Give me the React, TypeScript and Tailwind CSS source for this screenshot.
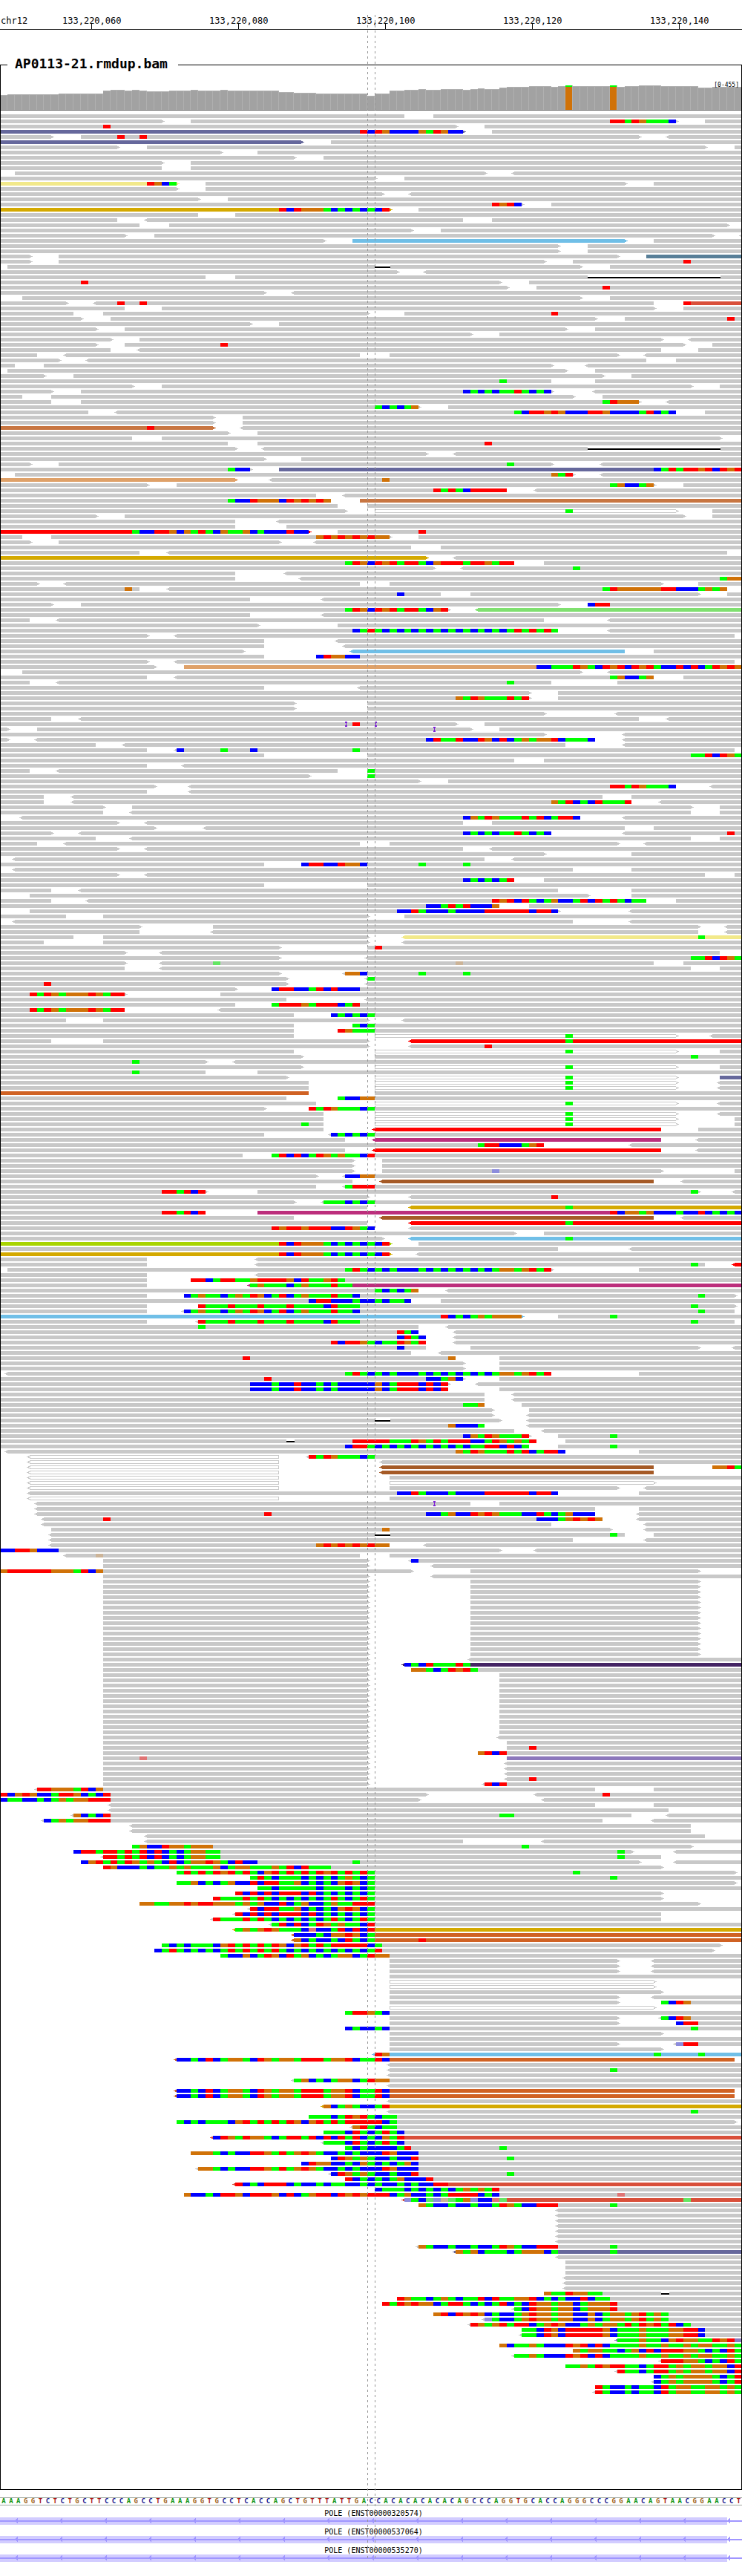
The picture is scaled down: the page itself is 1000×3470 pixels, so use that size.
import React from "react";

const BASES = 101;
const WIDTH = 1000;
const PITCH = 7;

const edge = (i: number) => Math.round((i * WIDTH) / BASES);

/*
 * One line per pileup row. Tokens:
 *   [o][colour][<]start-end[>]  a read (o = outlined, < and > = strand arrow)
 *   start:LETTERS               mismatched bases (lower case = low quality)
 *   dstart-end                  deletion
 *   ipos                        insertion
 * A leading "*n" repeats the row n times.
 */
const PILEUP = `
0-55 59-101
0-22> 26-92> 96-101 83:TTATGAAAC
0-62> 66-101 14:T
P0-63> 67-101 49:TCTGCCCCGATGCC
0-7> 11-87> <91-101 16:T 19:T
P0-41> 45-101
0-16> 20-96> 100-101
0-30> 35-101
0-40> 44-101
0-22> 26-101
0-22 26-101
2-66> <70-101
0-51> 55-101
Y0-24> 28-85> 89-101 20:TGCA
0-24> 28-101
0-52> <56-101
0-27> 31-101
0-71> 75-101 67:TGTC
D0-53> 57-101 38:TCTGGGACACACACT
0-27 32-101
0-16 <20-63 67-101
0-19 23-99>
0-56> 60-101
0-17> 21-97> <101-101
0-44> B48-85> 89-101
*2 0-76> 80-101
0-4> 8-84> S88-101
0-4> 8-74> 78-101 93:T
1-79> 83-101 d51-53
0-54> <58-101
0-28 32-101 d80-98
0-68> 72-101 11:T
0-69> 73-101 82:T
0-36> <40-101
3-79> 83-101
0-9> <13-89 R93-101 16:T 19:T 93:T
0-17 22-89> 93-101
0-10 14-50> 55-101 75:T
0-11> 15-81> 85-101 99:T
0-34> 38-101
0-13> 17-77> 81-101
0-64> 68-101
0-15> 19-90> <94-101
0-13> 17-93> 97-101 30:T
0-15 <19-90 95-101
0-5 <9-49 53-84> <88-101
0-8> <12-88 92-101
0-2 6-75> <80-101
1-77> 81-101
0-6> 10-82> 86-101
0-75 81-101 68:A
0-18> 22-94> 98-101
0-7> 11-75> <81-101 63:CACACAATACAC
0-3 7-78> 82-101
0-7 11-87> <91-101 82:ATGGG
0-57> 61-101 51:ACACAG
0-12 <16-92 96-101 70:ACTTGTGCCCTTGCCCCATCAC
*2 0-29> 33-101
O0-29> <33-101 20:T
0-31> 35-101
0-18 22-98>
0-31 35-101 66:T
0-32> <36-101 d80-98
0-58> <62-101
0-36> 41-101
0-4> 8-75> <82-101 69:A
0-34> P38-101 31:ACC 89:CATATTGTCTGT
2-78> <82-101 75:GAT
E0-32> <37-101 52:G
0-20> 24-89> 93-101 83:AGCCAG
0-69 <73-101 59:TATACTTTTT
0-43 <47-101
0-45 O49-101 31:ACCTGGGCTGTGTG
0-46 50-101
0-47> o51-92> 97-101 77:A
0-13> 17-93> 97-101
0-32 <38-101
0-32 39-101
F0-42> 46-101 57:T 18:ACCTTGCGATACGAAGCACCCTCC
0-3 7-53> 57-101 43:GTGTGTGTGG
0-4> 8-38> <43-101
0-56 60-101
0-19 <23-99
D0-58> <62-101
0-70 74-101 47:ATGCTGTATTACGTTTATTGATT
0-59> <63-101 78:A
0-32 <39-101
0-32 <41-101 98:AGG
0-5> <9-49 53-90> 95-101
0-19 <23-99 17:G 82:ATGGGGGGTTCCCAGAG
0-60 64-95> 99-101 54:C
0-34 <44-101
0-7> 11-76> 80-101 80:CTT
0-61> L<65-101 47:ATGCTGTATTACGT
0-34 <44-101
0-4 <8-74 <83-101
0-35> 46-101
0-76 <83-101 48:CATACACACACACACACACACATATATA
0-20> <24-100
0-36 <46-101
0-36 <47-101
0-33> B<48-85 89-101
0-36 43-101 43:CTGGCC
0-20> <24-100
0-21> E25-101 73:CCAAATGACTGTCTGTACCTCTCATGTG
3-79> <83-101
0-20 <24-89 93-101 83:AGCCAG
0-4 <8-75 84-101 69:A
0-36 <49-101
0-72> 76-101
0-72> 76-101 62:GATGAAATAT
*2 0-40> 50-101
0-74> <84-101
0-7 <11-87 <91-101
0-62> 66-101 48:T i47 i51
0-1> 5-64> 68-101 i59
0-74> <85-101
0-1> <5-81 <85-101 58:CTAATCCTGCTCAGAGGTCAAAC
0-13 <17-77 <85-101
0-20 <24-100 24:C 30:A 34:C 48:A
0-36 50-101 94:AATCTGA
0-70 74-101
0-20 <25-101
0-4 <8-46 50-101 50:A
0-42> 50-101 50:A
0-57> 61-101
0-21> <26-92 <97-101 83:TTATGAAAC
0-20 <26-101
0-6 <10-82 86-101
0-6 <10-86 <90-101 75:GATCACTAAAT
0-14> 18-94> 98-101
0-14 <18-94 98-101
<3-79 <85-101 63:CGATGAAATATCATTC
0-16> <20-63 67-101
0-21> <28-85 89-101
0-7> <11-75 <85-101 99:T 63:CACACAATACAC
0-13 <18-94 98-101
0-5 <9-49 53-84> <88-101
0-16> <20-63 <67-101
0-74> 86-101
<2-66 <70-101
0-36 41-101 57:A 63:A 41:CTTCCTGGC
<2-78 86-101
0-16> <20-96 100-101
0-70 74-101 63:CACACAT
0-36 50-101
0-7 <11-76 86-101
4-80> 86-101
0-7 <12-88 92-101 67:TGTCTACAGCCATCTATACAA
0-68 72-101 58:CCATATCCCG
4-76> <86-101 54:CCTACCCACCCCTTTTTTCTTC
0-9 14-50> 55-101
<2-78 <86-101
0-19> 29-95> <99-101
0-19 <29-95 <99-101
0-10 14-50> Y<55-101 95:A
0-6 14-50> <55-101
0-38> 50-101 51:T
0-17> <22-98
0-38> <50-101 94:AATCTGA
0-17> <22-89 93-101 29:a 62:g
0-17 <22-94 98-101
0-38> <47-101 47:GGC 57:A 63:A
0-39> <50-101 50:A
0-39> <50-101 6:T
0-32> 37-101 37:CTTCCATCTCCC
0-17> 30-101 4:TATGAGGGTGATT
0-39 <50-101
0-32 37-101 37:ATTTGATTTCAT
0-17 <30-101 4:TATGAGGGTGATT
0-40 45-101 45:CACACA
0-9 14-50> <55-101
0-40 48-101 48:ACA
0-40 46-101 46:TGAAA
0-40 o51-92> <97-101 77:A
0-7 14-50> F<56-101 77:A
0-50> <56-101 66:T
0-40 o51-92> 98-101 77:A
0-41> 51-101 94:A
0-28> <32-101 18:A
0-41> o51-92> 98-101 77:A
0-28 35-101 18:A
0-39> o51-92> P98-101 77:A
*2 0-42 o51-92> <98-101 77:A
C0-42 51-101
0-39 46-101 46:ACCGG
0-43 o51-92> <98-101 77:A
0-36> 42-101 42:TATGAAACA
0-44 o51-92> <98-101 77:A
0-44 o51-92> 100-101 77:A
0-44 o51-92> 100-101 41:A 77:A
0-44 F<51-90 95-101
0-36 <45-101 45:CACACA
0-47 M<51-90 <95-101
0-74 <86-101 65:ATTCCCAGT
0-47 F<51-90 <95-101
0-33 37-101 37:ATCTCATGAGAACT
*2 0-48> 52-101
0-48> 52-90> 100-101 67:c
0-43> <47-101 47:CCGG
0-48 N<52-89 <93-101
0-43 <47-101 47:ATTT
0-28> 35-95> <100-101 22:TTATCT 94:A
0-50> <56-101 75:T
0-40> <44-101 44:AAACACA
0-50 D<56-101 77:A
0-28 M35-101 22:TTATCT 83:TCGGAGCCCACCTCACAC
0-40 N<52-89 <93-101
0-50 F<56-101 77:A
0-51 <56-101 37:TGTTGTTTCCTGAC
0-70> 74-101
0-52> B<56-101 77:A
K0-53> 57-101 38:TCTGGGACACACACT
0-76 <86-101
D0-53> <57-101 38:TCTGGGACACACACT
0-20 <35-101
0-20 <35-96 F<100-101 94:A
1-75> 87-101 47:ATACACACCCACACACACACAGGAGTAT
0-20 <35-101
0-20 26-101 26:TTCATTAAGTTTTGCTAAGTA
0-20 M<34-101 34:AGAAACAGAAATAA
0-57 <61-101 51:ACACAG
0-20 25-100> 25:CAGAACAGATGCATCAGAAATAAC 95:A
0-56 60-101 42:CTTCCCACCACAAC
0-20 27-100> 27:TAAATAAATAAATAAAACTAAA 94:A
0-20 <25-100 25:CAGAACAGATGCATCAGAAATAAC 95:A
B0-71> 76-101 60:TCACAGAGGGG 83:A
0-20 <27-100 27:TAAATAAATAAATAAAACTAAA 94:A
0-57 <61-101 27:A
0-57 <62-101 54:TAC
0-58 <62-101 54:CTAC
0-58 <62-101 45:TCTTGACAATGAT
0-58 64-95> <100-101 54:C
0-56 <60-101
0-62 68-101 33:T 61:G
*2 0-63> 68-101
<1-75 87-101 47:ATACACACCCACACACACACAGGAGTAT
0-63> 68-101 36:T 58:CCAGC
0-61> <65-101 34:CCCACCTCCACACCCCCGCATTTCTCT
0-61 68-101 34:CCCACCTCCACACCCCCGCATTTCTCT
*2 0-66 <70-101
0-66 71-101 63:AAG
0-67> 72-101
0-67> <72-101
0-68> <72-101 d51-53
0-66 <72-101 61:GCCCA
0-70 <74-101
0-72> 76-101 63:CGATGAAAT 83:A
0-73 77-101 d39-40 48:TTTTTAAATGATATTTCCATGAGAT
0-72 76-101 47:CTTACACACACACACACAATTCTCA 83:A
<1-77 87-101 62:GATGAAATATCATTC
o<4-38 <42-101 42:TATGAAACA
o<4-38 <52-101
o<4-38 N<52-89 97-101 97:GGTA
o<4-38 N<52-89
o<4-38 53-101
o<4-38 o53-89>
o<4-38 53-84> <88-101
<4-76 87-101 54:CCTACCCACCCCTTTTTTCTTC
o<4-38 53-101
<5-64 68-101 i59
<5-81 87-101
<5-81 <87-101 36:T 58:CCAGCCTGTGAAACCTACAGCCC
<6-82 <87-101 14:T 73:CCCAGTGTG
<6-75 <88-101
7-83> <88-101 52:G
<7-85 89-101 d51-53 83:A
<7-78 <88-101
<7-53 <58-101 43:GTGTGTGTGG
0-68> <73-101 0:CCTTGCCC
<9-49 53-101 13:g
14-50> <56-101 56:C
14-50> <59-101
0-56> 64-95> 0:GTTTTTTGGGATCG
14-50> <59-101
*15 14-50> 64-95>
14-50> <64-101
14-50> V<55-101 55:CACTAAATA
14-50> 56-101 56:GGACATGTA
*12 14-50> 68-101
14-50> <68-101
14-50> 69-101
14-50> 69-101 72:T
14-50> 65-101 65:GTCT
14-50> U69-101 19:t
*3 14-50> <69-101
14-50> <69-101 72:T
14-50> <66-101 66:TCT
<5-81 89-101 5:TTGGGATCG
0-58> <73-101 82:T 0:TCGTGCCATTGCACT
0-57> <74-101 0:CAACCACAGAGGTTT
<15-81 89-101
<15-91
<10-86 <91-101 10:GCACT 68:AA
<6-82 <89-101 6:CAGAGGTTT
*2 <18-94
<20-96
<20-63 <74-101
18-94> 18:AGCCTGGAGGG 71:A
10-86> <92-101 84:A 10:CTTATTATATCTCACAGGAA
<14-90 84:A 14:TTATATCTCACAGGAA
11-87> <92-101 48:A 11:CGTATATGAGACTCAGGTGACTCC
14-90> 14:TGCCCACAAGAGAAAGCAGGAAAGATCTAAA
24-100> 78:A 24:ATATATGTATACGTATATATGTATATA
34-101 83:A 34:ATACAAACACACAGACA
24-100> 24:AAGCACAGCCTCTTAAGCACACGTGCA
35-101 35:AACAAAAACAAACACA
32-90> 32:TCTCTCTTTCTCACACACA
29-90> 29:TAAATATACACACACATACATA
19-95> 19:GGAAGGTGTTGGGAGAGCCTCAGCCAGAATTT
<34-101 34:TCTTAAGCACACGTGCA
<32-90 32:TCTCTCTTTCTCACACACA
<29-90 29:TAAATATACACACACATACATA
<37-101 37:ATCTCATGAGAACT
D<32-101 32:AGAGTGAAACtCCATCTCT
C<40-101 40:CCCACGGTGCA
C<40-101 57:T 40:GCACCACTACA
22-98> 22:ACACAAACGTATATATGCGTATATTTTTCA
21-97> 21:CATACACACATATATATACACACACACACAT
30-101 30:ACCGCATGCTAGCACAGGCATGG
*3 53-84> <89-101
53-101
*2 o53-89>
53-90>
53-84> <89-101
53-84> 90-101 90:ACTG
o53-89>
47-101 47:ATTGAC
53-84> <90-101 90:ACTG
53-84> 92-101 92:CTT
47-101 47:CACCAC 94:A
53-90>
53-101
53-84> <92-101 92:cTT
53-90>
B<51-101 51:TG 89:A 95:A
C<24-100 24:CCACTCAGGACTGAGGATTTAGGTCAATC
<53-101
<53-101 83:A
<53-101
<40-101 40:AGCACAGGCATGG
<53-101
*2 C<24-100 24:CCACTCAGGACTGAGGATTTAGGTCAATC
<53-101
D<44-101 44:GCAGACCAT
<53-101 94:A
42-101 42:AAACATGTACAA
24-100> 24:ACACAAACGTATATATGCGTATATTTTTCA
<48-101 48:GTACAA
44-101 44:AAACTACATAC
R<29-101 29:CTGATGGACATTATCTCTATCACGAT
<44-101 44:AAACTACATAC
47-101 68:A 47:ACACCCCAT
26-101 26:GGGACACCTTGATAGTGACCACACCCTGCCC
45-101 69:A 45:CTGAGACCACCT
41-101 41:CTGGCCACGACACAGC
<27-101 27:GGACACCTTGATAGTGACCACACCCTGCCC
<45-101 69:A 45:CTGAGACCACCT
47-101 47:TCACACAGCCCT
R<32-101 32:TCACTTTCACCACAACCACACCACACCTT
51-101 51:CAAACACACACAGAGAT
25-101 84:t 25:GCCACTTGCTTTGCTCAGTTCTGTGTTTCAGCCACATTTTCAC
R<55-101 55:cACacgaAGcCCta 93:a
57-101 83:A 57:GACCACCACCATGACCTTT
*7 <76-101
<57-101 83:A 57:GACCACCACCATGACCTTT
P<62-101 83:A 62:GAGCAAACAGGGCA
<76-101
*3 77-101
*3 <77-101
74-101 d90-91 74:GAATGGAA
54-101 54:TGAACAGACAATCTAAGGTCACACCTCAA
52-101 52:TATGTGGCATTACACATCACTGGAGGCAGGGT
<70-101 70:ACTGGAGGCAGGGT
59-101 59:GTCTGTGCACCAGTGGAGGCCGCAGGAGTAGA
<66-101 66:cACCAGTGGAGGCCGCAGGAGTAGA
<64-101 64:TGAGTATTCAGTGCCAGAGGATATGTATCA
71-101 71:AACTGCTTTTTGCAAAGAAAGGTTC
<71-101 71:AACTGCTTTTTGCAAAGAAAGGTTC
U<84-101 84:AAAGAACGTGGAATGT
68-101 68:GCAAGACCCTGTCTCAAAAGAAGAAGAGGAAGA
78-101 78:GAGGAACAGCTCTTTGGACACTA
<70-101 70:AAGACCCTGTCTCAAAAGAAGAAGAGGAAGA
<90-101 90:TTTGGACACTA
77-101 77:AAGATGTTAACATTAGAGGAGGCT
<84-101 84:TAACATTAGAGGAGGCT
89-101 89:CAGAGGGGACAT
<89-101 89:CAGAGGGGACAT
81-101 81:TACCACAACTAGGAAGGAGA
<81-101 81:TACCACAACTAGGAAGGAGA
`;

const ROWS: string[] = PILEUP.trim()
  .split("\n")
  .flatMap((line) => {
    const m = /^\*(\d+) (.*)$/.exec(line);
    return m ? Array<string>(Number(m[1])).fill(m[2]) : [line];
  });

const READ_COLOURS: Record<string, string> = {
  P: "#66689c",
  Y: "#f2e98a",
  D: "#d4a900",
  B: "#70bfe7",
  S: "#587f98",
  R: "#d94f3a",
  O: "#c87642",
  E: "#dfa169",
  L: "#80e070",
  F: "#ff0000",
  C: "#d06224",
  M: "#bc2e7c",
  N: "#a55a26",
  K: "#a8d400",
  V: "#442464",
  U: "#8c78bc",
};

const BASE_COLOURS: Record<string, string> = {
  A: "#00ff00",
  C: "#0000ff",
  G: "#d07208",
  T: "#ff0000",
  a: "#64e664",
  c: "#8c8cdc",
  g: "#ccb498",
  t: "#e07474",
};

const box = (x: number, y: number, w: number, h: number) => `M${x} ${y}h${w}v${h}h${-w}z`;

function buildLayers() {
  const reads: Record<string, string> = {};
  const bases: Record<string, string> = {};
  let hollow = "";
  let gaps = "";
  let deletions = "";
  let insertions = "";
  ROWS.forEach((row, r) => {
    const y = r * PITCH;
    for (const token of row.split(" ")) {
      const read = /^(o?)([A-Z]?)(<?)(\d+)-(\d+)(>?)$/.exec(token);
      if (read) {
        const s = edge(Number(read[4]));
        const e = edge(Number(read[5]));
        const colour = READ_COLOURS[read[2]] ?? "#c8c8c8";
        let d = box(s, y, e - s, 5);
        if (read[3]) d += box(s - 2, y + 1, 2, 3) + box(s - 4, y + 2, 2, 1);
        if (read[6]) d += box(e, y + 1, 2, 3) + box(e + 2, y + 2, 2, 1);
        reads[colour] = (reads[colour] ?? "") + d;
        if (read[1]) {
          hollow += box(s + 1, y + 1, e - s - 2, 3);
          if (read[3]) hollow += box(s - 1, y + 2, 2, 1);
          if (read[6]) hollow += box(e - 1, y + 1, 1, 3) + box(e, y + 2, 1, 1);
        }
        continue;
      }
      const del = /^d(\d+)-(\d+)$/.exec(token);
      if (del) {
        const s = edge(Number(del[1]));
        const w = edge(Number(del[2])) - s + 1;
        gaps += box(s, y, w, 5);
        deletions += box(s, y + 2, w, 2);
        continue;
      }
      const ins = /^i(\d+)$/.exec(token);
      if (ins) {
        const x = edge(Number(ins[1]));
        insertions += box(x, y - 1, 3, 2) + box(x + 1, y, 1, 5) + box(x, y + 4, 3, 2);
        continue;
      }
      const [start, letters] = token.split(":");
      [...letters].forEach((letter, k) => {
        const s = edge(Number(start) + k);
        const colour = BASE_COLOURS[letter];
        bases[colour] = (bases[colour] ?? "") + box(s, y, edge(Number(start) + k + 1) - s, 5);
      });
    }
  });
  return { reads, bases, hollow, gaps, deletions, insertions };
}

const LAYERS = buildLayers();

/* Coverage bar heights in pixels as [height, number of bases]. */
const COVERAGE: number[] = (
  [
    [20, 1], [21, 7], [22, 6], [26, 1], [27, 2], [26, 1], [27, 1], [26, 1], [25, 3], [26, 3],
    [27, 1], [26, 3], [27, 1], [26, 7], [24, 2], [23, 3], [22, 7], [19, 1], [22, 2], [26, 2],
    [27, 2], [28, 1], [27, 2], [28, 3], [27, 1], [28, 1], [29, 1], [28, 2], [30, 1], [31, 3],
    [32, 3], [31, 1], [32, 1], [33, 1], [32, 5], [33, 1], [31, 1], [32, 2], [33, 3], [32, 5],
    [30, 2], [31, 4],
  ] as [number, number][]
).flatMap(([h, n]) => Array<number>(n).fill(h));

const VARIANT_SITES = [77, 83];

const SEQUENCE =
  "AAAGGTCTCTGCTTCCCAGCCTGAAAGGTGCCTCACCAGCTGTTTATTGAC" +
  "CACACACACACAGCCCAGGTGCACCAGGGCCCGGAACAGTAACGGAACCT";

const LETTER_CLASSES: Record<string, string> = {
  A: "text-[#109410]",
  C: "text-[#14148c]",
  G: "text-[#a0641a]",
  T: "text-[#a81010]",
};

const TICKS = ["133,220,060", "133,220,080", "133,220,100", "133,220,120", "133,220,140"];
const GENES = ["POLE (ENST00000320574)", "POLE (ENST00000537064)", "POLE (ENST00000535270)"];

function Ruler() {
  return (
    <header className="flex h-10 overflow-hidden border-b border-black pt-5 text-[12px] leading-4">
      <span className="w-[2.475%] shrink-0 pl-px whitespace-nowrap">chr12</span>
      {TICKS.map((label) => (
        <div key={label} className="flex w-[19.802%] shrink-0 flex-col items-center">
          <span>{label}</span>
          <span className="-mt-1 h-[7px] w-px shrink-0 bg-black" />
        </div>
      ))}
    </header>
  );
}

function Coverage() {
  return (
    <div className="relative">
      <svg
        className="block h-[51px] w-full"
        viewBox="1 0 998 51"
        preserveAspectRatio="none"
        shapeRendering="crispEdges"
        role="img"
        aria-label="Coverage"
      >
        {COVERAGE.map((h, i) => {
          const x = edge(i);
          const w = edge(i + 1) - x;
          const y = 50 - h;
          return (
            <g key={i}>
              <rect x={x} y={y} width={w} height={h} fill="#b0b0b0" />
              {VARIANT_SITES.includes(i) ? (
                <>
                  <rect x={x} y={y} width={w - 1} height={2} fill="#00ff00" />
                  <rect x={x} y={y + 2} width={w - 1} height={h - 2} fill="#d07208" />
                </>
              ) : (
                <rect x={x} y={y + 1} width={w - 1} height={h - 1} fill="#a2a2a2" />
              )}
            </g>
          );
        })}
        <rect x={0} y={50} width={1000} height={1} fill="#707070" />
      </svg>
      <span className="absolute top-3 right-[3px] text-[8px] leading-[10px]">[0-455]</span>
    </div>
  );
}

function Reads() {
  const height = ROWS.length * PITCH;
  return (
    <svg
      className="mt-[5px] block w-full"
      height={height}
      viewBox={`1 0 998 ${height}`}
      preserveAspectRatio="none"
      shapeRendering="crispEdges"
      role="img"
      aria-label="Aligned reads"
    >
      {Object.entries(LAYERS.reads).map(([colour, d]) => (
        <path key={colour} d={d} fill={colour} />
      ))}
      <path d={LAYERS.hollow} fill="#ffffff" />
      <path d={LAYERS.gaps} fill="#ffffff" />
      <path d={LAYERS.deletions} fill="#000000" />
      {Object.entries(LAYERS.bases).map(([colour, d]) => (
        <path key={colour} d={d} fill={colour} />
      ))}
      <path d={LAYERS.insertions} fill="#7b1fd6" />
    </svg>
  );
}

function Gene({ name }: { name: string }) {
  return (
    <div>
      <p className="pl-[7px] text-center text-[10px] leading-[10px]">{name}</p>
      <svg
        className="block h-[10px] w-full"
        viewBox="0 0 1000 10"
        preserveAspectRatio="none"
        shapeRendering="crispEdges"
        aria-hidden="true"
      >
        <rect x={0} y={0} width={980} height={10} fill="#d2ccff" />
        <rect x={0} y={4} width={1000} height={2} fill="#a096ff" />
        {Array.from({ length: 17 }, (_, i) => (
          <path
            key={i}
            d={`M${20 + i * 60} 4h1v-1h1v-1h1v-1h1v7h-1v-1h-1v-1h-2z`}
            fill="#a096ff"
          />
        ))}
      </svg>
    </div>
  );
}

export default function App() {
  return (
    <main className="relative w-full overflow-hidden bg-white pb-5 font-['DejaVu_Sans_Mono',monospace] text-black">
      <Ruler />
      <section className="mt-[47px] border border-black pb-[126px]">
        <h1 className="-mt-[14px] ml-[9px] w-[230px] bg-white pl-[10px] text-[18px] leading-6 font-bold whitespace-nowrap">
          AP0113-21.rmdup.bam
        </h1>
        <Coverage />
        <Reads />
      </section>
      <div className="mt-[10px] flex border-y border-[#a0a8a0] text-center text-[9px] leading-[9px] font-bold">
        {[...SEQUENCE].map((letter, i) => (
          <span key={i} className={`min-w-0 flex-1 ${LETTER_CLASSES[letter]}`}>
            {letter}
          </span>
        ))}
      </div>
      <div className="mt-1.5 flex flex-col gap-[5px]">
        {GENES.map((name) => (
          <Gene key={name} name={name} />
        ))}
      </div>
      <div className="pointer-events-none absolute top-5 bottom-6 left-[49.5%] w-px bg-[repeating-linear-gradient(to_bottom,#969696_0_3px,transparent_3px_7px)]" />
      <div className="pointer-events-none absolute top-5 bottom-6 left-[50.5%] w-px bg-[repeating-linear-gradient(to_bottom,#969696_0_3px,transparent_3px_7px)]" />
    </main>
  );
}
